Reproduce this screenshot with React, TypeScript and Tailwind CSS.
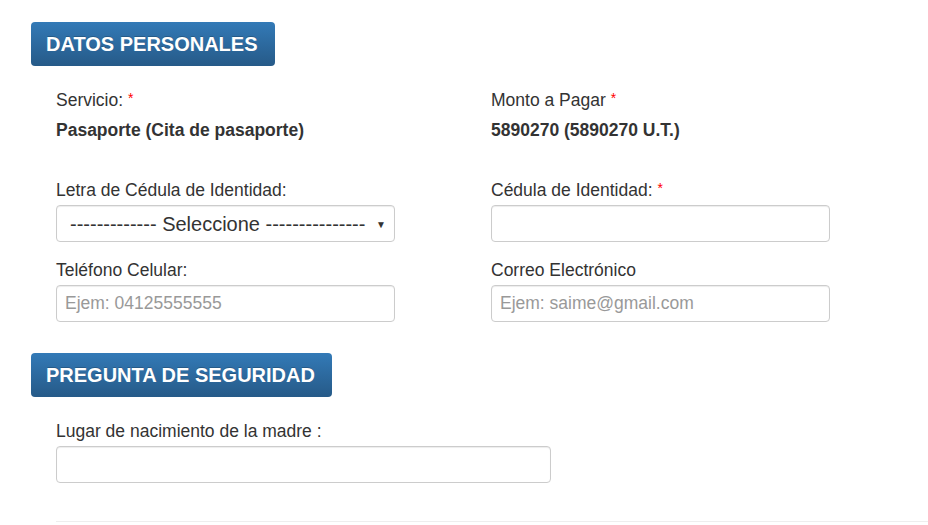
import React from 'react';

function SectionTitle({ children }: { children: React.ReactNode }) {
  return (
    <div className="inline-flex h-[44px] items-center rounded-[4px] bg-gradient-to-b from-[#337ab7] to-[#265a88] pl-[15px] pr-[17px] text-[20px] font-bold text-white [text-shadow:0_-1px_0_rgba(0,0,0,0.2)]">
      {children}
    </div>
  );
}

function Req() {
  return <span className="relative -top-[3px] ml-[5px] text-[14px] text-[#ff0000]">*</span>;
}

function Label({ children, required }: { children: React.ReactNode; required?: boolean }) {
  return (
    <div className="h-[20px] text-[17.5px] leading-[20px] text-[#333]">
      {children}
      {required && <Req />}
    </div>
  );
}

function TextInput({ placeholder, width = 'w-[339px]' }: { placeholder?: string; width?: string }) {
  return (
    <input
      placeholder={placeholder}
      className={`${width} mt-[5px] h-[37px] rounded-[4px] border border-[#ccc] bg-white px-[8px] text-[17.5px] text-[#555] shadow-[inset_0_1px_1px_rgba(0,0,0,0.075)] outline-none placeholder:text-[#999]`}
    />
  );
}

export default function App() {
  return (
    <div className="min-h-[525px] bg-white font-['Liberation_Sans',Arial,sans-serif] text-[#333]">
      <div className="pl-[31px] pt-[22px]">
        <SectionTitle>DATOS PERSONALES</SectionTitle>
      </div>

      <div className="ml-[56px] mt-[24px] grid grid-cols-[339px_339px] gap-x-[96px]">
        {/* servicio / monto */}
        <div>
          <Label required>Servicio:</Label>
          <div className="mt-[10px] h-[20px] text-[17.5px] font-bold leading-[20px]">Pasaporte (Cita de pasaporte)</div>
        </div>
        <div>
          <Label required>Monto a Pagar</Label>
          <div className="mt-[10px] h-[20px] text-[17.5px] font-bold leading-[20px]">5890270 (5890270 U.T.)</div>
        </div>

        {/* cedula */}
        <div className="mt-[40px]">
          <Label>Letra de Cédula de Identidad:</Label>
          <div className="relative mt-[5px] flex h-[37px] w-[339px] items-center rounded-[4px] border border-[#ccc] bg-white pl-[13px] text-[20px] text-[#333] shadow-[inset_0_1px_1px_rgba(0,0,0,0.075)]">
            <span>------------- Seleccione ---------------</span>
            <span className="absolute right-[8px] top-[11px] text-[10px]">▼</span>
          </div>
        </div>
        <div className="mt-[40px]">
          <Label required>Cédula de Identidad:</Label>
          <TextInput />
        </div>

        {/* telefono / correo */}
        <div className="mt-[18px]">
          <Label>Teléfono Celular:</Label>
          <TextInput placeholder="Ejem: 04125555555" />
        </div>
        <div className="mt-[18px]">
          <Label>Correo Electrónico</Label>
          <TextInput placeholder="Ejem: saime@gmail.com" />
        </div>
      </div>

      <div className="pl-[31px] pt-[31px]">
        <SectionTitle>PREGUNTA DE SEGURIDAD</SectionTitle>
      </div>

      <div className="ml-[56px] mt-[24px]">
        <Label>Lugar de nacimiento de la madre :</Label>
        <TextInput width="w-[495px]" />
        <div className="mt-[38px] border-t border-[#eee]" />
      </div>
    </div>
  );
}
